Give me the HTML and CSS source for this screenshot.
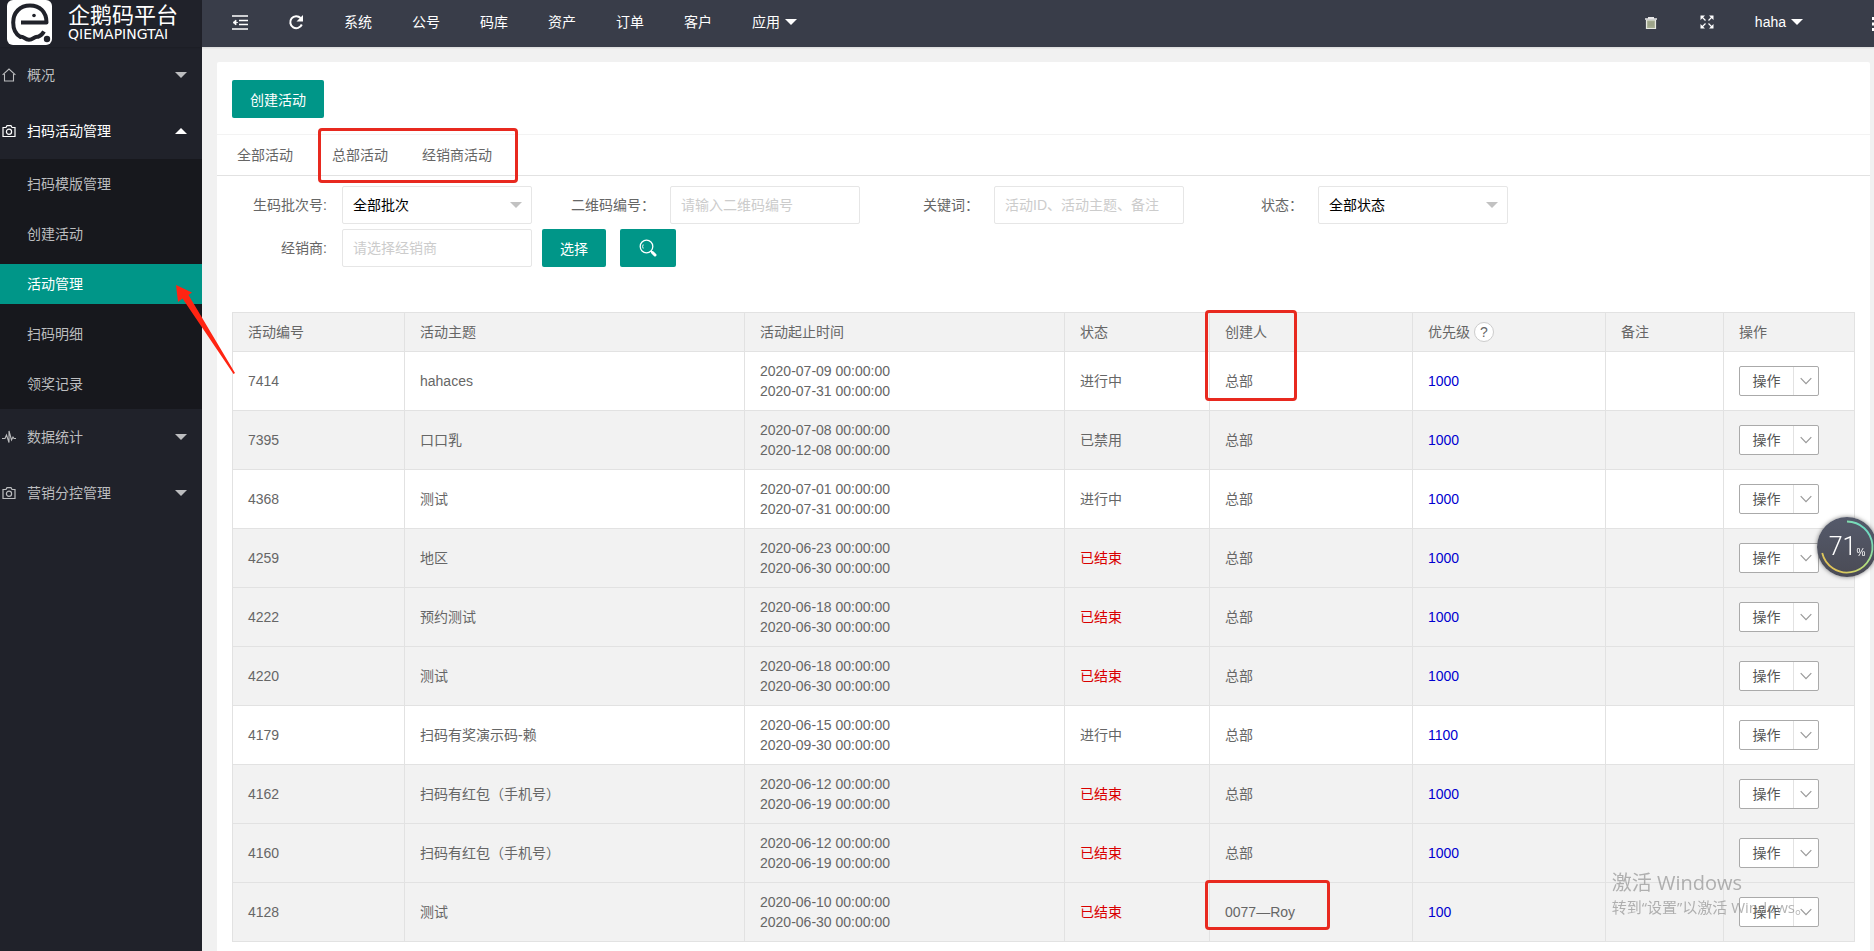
FILE: index.html
```html
<!DOCTYPE html>
<html lang="zh-CN">

<head>
    <meta charset="UTF-8">
    <meta name="viewport" content="width=device-width, initial-scale=1.0">
    <title>活动管理 - 企鹅码平台</title>
    <link rel="stylesheet" href="styles.css">
</head>

<body>
    <!-- 公用图标 -->
    <svg class="sprite" aria-hidden="true">
        <symbol id="i-camera" viewBox="0 0 14 12">
            <path d="M1 2.5h3l1-1.8h4l1 1.8h3v9H1z" fill="none" stroke="currentColor" stroke-width="1.2"/>
            <circle cx="7" cy="6.8" r="2.6" fill="none" stroke="currentColor" stroke-width="1.2"/>
        </symbol>
        <symbol id="i-down" viewBox="0 0 12 8">
            <path d="M.7 1.2 6 6.6l5.3-5.4" fill="none" stroke="currentColor" stroke-width="1.2"/>
        </symbol>
    </svg>

    <div class="layout">
        <aside class="sidebar">
            <div class="logo">
                <svg class="logo-mark" viewBox="0 0 45 45" aria-hidden="true">
                    <rect width="45" height="45" rx="6" fill="#fff"/>
                    <path d="M14 22.500H39.500C39.500 11.500 32.500 5.500 23 5.500C13 5.500 6.200 12.500 6.200 22.500C6.200 29 9 34.500 13.500 37C16.500 35.500 17.500 39.800 22 39.800C26.500 39.800 27 36 31 36.800C33.500 36 35.500 34 37 31.500" fill="none" stroke="#20222a" stroke-width="4" stroke-linejoin="round"/>
                    <circle cx="27" cy="15.500" r="1.800" fill="#20222a"/>
                    <circle cx="40" cy="39" r="3.200" fill="#20222a"/>
                </svg>
                <div class="logo-text">
                    <span class="logo-cn">企鹅码平台</span>
                    <span class="logo-en">QIEMAPINGTAI</span>
                </div>
            </div>

            <nav class="menu">
                <a class="menu-item" href="#">
                    <svg class="menu-icon" viewBox="0 0 14 14" aria-hidden="true"><path d="M.6 6.800 7 1l6.400 5.800M2.500 6v7h9V6" fill="none" stroke="currentColor" stroke-width="1.100"/></svg>
                    概况<span class="caret"></span>
                </a>
                <a class="menu-item open" href="#">
                    <svg class="menu-icon" aria-hidden="true"><use href="#i-camera"/></svg>
                    扫码活动管理<span class="caret up"></span>
                </a>
                <div class="submenu">
                    <a href="#">扫码模版管理</a>
                    <a href="#">创建活动</a>
                    <a href="#" class="active">活动管理</a>
                    <a href="#">扫码明细</a>
                    <a href="#">领奖记录</a>
                </div>
                <a class="menu-item" href="#">
                    <svg class="menu-icon" viewBox="0 0 14 14" aria-hidden="true"><path d="M0 8.500h3L4.500 5 7 12.500V1l2.500 9 1.500-3 1 1.500h2" fill="none" stroke="currentColor" stroke-width="1.100"/></svg>
                    数据统计<span class="caret"></span>
                </a>
                <a class="menu-item" href="#">
                    <svg class="menu-icon" aria-hidden="true"><use href="#i-camera"/></svg>
                    营销分控管理<span class="caret"></span>
                </a>
            </nav>
        </aside>

        <div class="content">
            <header class="topbar">
                <a href="#" aria-label="收起菜单">
                    <svg class="top-icon" viewBox="0 0 16 16" aria-hidden="true"><path d="M0 2h16M7 6.500h9M7 10.500h9M0 15h16" stroke="currentColor" stroke-width="1.600"/><path d="M1 8.500 4 6v5zM4 8.500h2" fill="currentColor" stroke="currentColor" stroke-width=".8"/></svg>
                </a>
                <a href="#" aria-label="刷新">
                    <svg class="top-icon" viewBox="0 0 16 16" aria-hidden="true"><path d="M12.600 4A6 6 0 1 0 13.800 10.500" fill="none" stroke="currentColor" stroke-width="2"/><path d="M15 1v6.500H8.500z" fill="currentColor"/></svg>
                </a>
                <a href="#">系统</a>
                <a href="#">公号</a>
                <a href="#">码库</a>
                <a href="#">资产</a>
                <a href="#">订单</a>
                <a href="#">客户</a>
                <a href="#">应用<span class="caret"></span></a>
                <a href="#" class="push" aria-label="清除缓存">
                    <svg class="top-icon" viewBox="0 0 16 16" aria-hidden="true"><path d="M3.500 6h9v8.500h-9z" fill="#a7ae93" stroke="#e6e8e0" stroke-width="1.200"/><path d="M2 5h12M5 3.700h6" stroke="#e8e8e8" stroke-width="1.600"/><path d="M6 7.500v5M8 7.500v5M10 7.500v5" stroke="#8d9678" stroke-width=".8"/></svg>
                </a>
                <a href="#" aria-label="全屏">
                    <svg class="top-icon" viewBox="0 0 16 16" aria-hidden="true"><path d="M1.500 1.500H6l-4.500 4.500zM14.500 1.500v4.500L10 1.500zM1.500 14.500V10L6 14.500zM14.500 14.500H10l4.500-4.500z" fill="currentColor"/><path d="m3 3 3.500 3.500M13 3 9.500 6.500M3 13l3.500-3.500M13 13 9.500 9.500" stroke="currentColor" stroke-width="1.200"/></svg>
                </a>
                <a href="#">haha<span class="caret"></span></a>
                <a href="#" class="more" aria-label="更多">
                    <svg viewBox="0 0 3 14" aria-hidden="true"><path d="M0 0h3v3H0zM0 5.500h3v3H0zM0 11h3v3H0z" fill="currentColor"/></svg>
                </a>
            </header>

            <main class="card">
                <div class="card-head">
                    <button type="button" class="btn">创建活动</button>
                </div>

                <div class="tabs">
                    <a href="#" class="first">全部活动</a>
                    <a href="#">总部活动</a>
                    <a href="#">经销商活动</a>
                    <div class="mark mark-tabs"></div>
                </div>

                <form class="filters">
                    <div class="filter-row">
                        <div class="field first">
                            <label for="batch">生码批次号:</label>
                            <div class="select">
                                <select id="batch">
                                    <option>全部批次</option>
                                </select>
                            </div>
                        </div>
                        <div class="field">
                            <label for="qrcode">二维码编号：</label>
                            <input type="text" id="qrcode" placeholder="请输入二维码编号">
                        </div>
                        <div class="field">
                            <label for="keyword">关键词：</label>
                            <input type="text" id="keyword" placeholder="活动ID、活动主题、备注">
                        </div>
                        <div class="field">
                            <label for="status">状态：</label>
                            <div class="select">
                                <select id="status">
                                    <option>全部状态</option>
                                </select>
                            </div>
                        </div>
                    </div>
                    <div class="filter-row">
                        <div class="field first">
                            <label for="dealer">经销商:</label>
                            <input type="text" id="dealer" placeholder="请选择经销商">
                        </div>
                        <button type="button" class="btn btn-pick">选择</button>
                        <button type="button" class="btn" aria-label="搜索">
                            <svg class="search-icon" viewBox="0 0 20 20" aria-hidden="true"><circle cx="8.500" cy="8.500" r="6.300" fill="none" stroke="currentColor" stroke-width="1.300"/><path d="M5.200 6.500a4 4 0 0 0 0 4" fill="none" stroke="currentColor"/><path d="m13 13 1.500 1.500" stroke="currentColor" stroke-width="1.300"/><path d="m14.500 14.500 2.500 2.500" stroke="currentColor" stroke-width="3" stroke-linecap="round"/></svg>
                        </button>
                    </div>
                </form>

                <div class="table-wrap">
                    <table>
                        <colgroup>
                            <col class="c-id">
                            <col class="c-title">
                            <col class="c-time">
                            <col class="c-status">
                            <col class="c-owner">
                            <col class="c-level">
                            <col class="c-note">
                            <col class="c-action">
                        </colgroup>
                        <thead>
                            <tr>
                                <th>活动编号</th>
                                <th>活动主题</th>
                                <th>活动起止时间</th>
                                <th>状态</th>
                                <th class="marked">创建人<div class="mark mark-owner"></div></th>
                                <th>优先级<button type="button" class="help">?</button></th>
                                <th>备注</th>
                                <th>操作</th>
                            </tr>
                        </thead>
                        <tbody id="rows"></tbody>
                    </table>
                </div>
            </main>
        </div>
    </div>

    <!-- 箭头标注 -->
    <svg class="arrow" viewBox="0 0 60 92" aria-hidden="true"><path d="M1 1 17 8.500 13.500 11 60 89 58.500 90 7.500 14.500 3 18z" fill="#ff2412"/></svg>

    <!-- 悬浮球 -->
    <div class="ball">
        <svg viewBox="0 0 60 60" aria-hidden="true">
            <defs>
                <linearGradient id="ring" x1="0" y1="1" x2="1" y2="0">
                    <stop offset="0" stop-color="#f0b84a"/>
                    <stop offset=".5" stop-color="#b9e07a"/>
                    <stop offset="1" stop-color="#4fd8e0"/>
                </linearGradient>
            </defs>
            <path d="M30 4.500A25.500 25.500 0 1 1 5.200 36" fill="none" stroke="url(#ring)" stroke-width="1.800"/>
        </svg>
        <span class="ball-num">71</span><span class="ball-unit">%</span>
    </div>

    <div class="watermark">
        <p class="wm-title">激活 Windows</p>
        <p class="wm-text">转到“设置”以激活 Windows。</p>
    </div>

    <script>
        const rows = [
            ['7414', 'hahaces', '2020-07-09', '2020-07-31', '进行中', '总部', '1000'],
            ['7395', '口口乳', '2020-07-08', '2020-12-08', '已禁用', '总部', '1000'],
            ['4368', '测试', '2020-07-01', '2020-07-31', '进行中', '总部', '1000'],
            ['4259', '地区', '2020-06-23', '2020-06-30', '已结束', '总部', '1000'],
            ['4222', '预约测试', '2020-06-18', '2020-06-30', '已结束', '总部', '1000'],
            ['4220', '测试', '2020-06-18', '2020-06-30', '已结束', '总部', '1000'],
            ['4179', '扫码有奖演示码-赖', '2020-06-15', '2020-09-30', '进行中', '总部', '1100'],
            ['4162', '扫码有红包（手机号）', '2020-06-12', '2020-06-19', '已结束', '总部', '1000'],
            ['4160', '扫码有红包（手机号）', '2020-06-12', '2020-06-19', '已结束', '总部', '1000'],
            ['4128', '测试', '2020-06-10', '2020-06-30', '已结束', '0077—Roy', '100']
        ];

        document.getElementById('rows').innerHTML = rows.map(([id, title, start, end, status, owner, level]) => {
            const running = status === '进行中';
            const ended = status === '已结束';
            const isDealer = owner !== '总部';
            return `<tr class="${running ? '' : 'off'}">
                <td>${id}</td>
                <td>${title}</td>
                <td>${start} 00:00:00<br>${end} 00:00:00</td>
                <td class="${ended ? 'ended' : ''}">${status}</td>
                <td class="${isDealer ? 'marked' : ''}">${owner}${isDealer ? '<div class="mark mark-dealer"></div>' : ''}</td>
                <td><a href="#" class="level">${level}</a></td>
                <td></td>
                <td><button type="button" class="action"><span>操作</span><svg viewBox="0 0 12 8" aria-hidden="true"><use href="#i-down"/></svg></button></td>
            </tr>`;
        }).join('');
    </script>
</body>

</html>
```
FILE: styles.css
```css
* {
    box-sizing: border-box;
    margin: 0;
    padding: 0;
}

body {
    background-color: #f1f1f1;
    color: #666;
    font-family: 'Liberation Sans', 'Noto Sans CJK SC', sans-serif;
    font-size: 14px;
    line-height: 24px;
    overflow: hidden;
}

a {
    color: inherit;
    text-decoration: none;
}

input,
select,
button {
    font-family: inherit;
    font-size: 14px;
}

.sprite {
    position: absolute;
    width: 0;
    height: 0;
}

.layout {
    display: flex;
    min-height: 100vh;
}

/* 左侧菜单 */
.sidebar {
    flex: none;
    width: 202px;
    background-color: #20222a;
    color: #bcbdbf;
}

.logo {
    display: flex;
    gap: 16px;
    height: 47px;
    padding-left: 7px;
    color: #fff;
    box-shadow: 0 1px 2px rgba(0, 0, 0, 0.15);
}

.logo-mark {
    width: 45px;
    height: 45px;
}

.logo-text {
    display: flex;
    flex-direction: column;
    padding-top: 5px;
    white-space: nowrap;
}

.logo-cn {
    font-size: 22px;
    line-height: 22px;
}

.logo-en {
    font-family: 'DejaVu Sans', sans-serif;
    font-size: 14px;
    line-height: 14px;
}

.menu-item {
    display: flex;
    align-items: center;
    height: 56px;
    padding: 0 15px 0 2px;
}

.menu-item.open {
    color: #fff;
}

.menu-icon {
    width: 14px;
    height: 14px;
    margin-right: 11px;
}

.menu .caret {
    margin-left: auto;
}

.caret {
    border: 6px solid transparent;
    border-top-color: currentColor;
    border-bottom: 0;
}

.caret.up {
    border-top: 0;
    border-bottom: 6px solid currentColor;
}

.submenu {
    display: flex;
    flex-direction: column;
    gap: 10px;
    padding: 5px 0;
    background-color: #17181d;
}

.submenu a {
    line-height: 40px;
    padding-left: 27px;
}

.submenu .active {
    background-color: #009688;
    color: #fff;
}

/* 顶部导航 */
.content {
    flex: 1;
    min-width: 0;
    display: flex;
    flex-direction: column;
}

.topbar {
    display: flex;
    height: 47px;
    padding-left: 10px;
    background-color: #393d49;
    color: #fff;
    box-shadow: 0 1px 2px rgba(0, 0, 0, 0.1);
}

.topbar a {
    display: flex;
    align-items: center;
    gap: 5px;
    padding: 0 20px 3px;
}

.topbar .push {
    margin-left: auto;
}

.topbar .more {
    width: 51px;
    padding: 0 0 0 49px;
    overflow: hidden;
}

.more svg {
    flex: none;
    width: 3px;
    height: 14px;
}

.top-icon {
    width: 16px;
    height: 16px;
}

/* 主体卡片 */
.card {
    flex: 1;
    margin: 15px 4px 0 15px;
    background-color: #fff;
    border-radius: 2px 2px 0 0;
}

.card-head {
    padding: 18px 15px 16px;
    border-bottom: 1px solid #f3f3f3;
}

.btn {
    display: inline-flex;
    align-items: center;
    height: 38px;
    padding: 0 18px;
    border: none;
    border-radius: 2px;
    background-color: #009688;
    color: #fff;
    cursor: pointer;
}

.card-head .btn {
    display: flex;
}

.tabs {
    position: relative;
    display: flex;
    gap: 4px;
    padding-left: 5px;
    border-bottom: 1px solid #e2e2e2;
}

.tabs a {
    padding: 0 15px;
    line-height: 40px;
}

.tabs .first {
    padding-right: 20px;
}

/* 查询条件 */
.filters {
    display: flex;
    flex-direction: column;
    gap: 5px;
    padding: 10px 0 45px 1px;
}

.filter-row {
    display: flex;
    gap: 10px;
}

.field {
    display: flex;
    align-items: center;
}

.field label {
    width: 124px;
    padding-right: 15px;
    text-align: right;
}

.filter-row:first-child .first {
    margin-right: 4px;
}

.field input,
.field select {
    width: 190px;
    height: 38px;
    padding: 0 10px;
    border: 1px solid #e6e6e6;
    border-radius: 2px;
    background-color: #fff;
    color: #000;
}

.field select {
    appearance: none;
}

.field input::placeholder {
    color: #ccc;
}

.select {
    position: relative;
}

.select::after {
    content: '';
    position: absolute;
    top: 16px;
    right: 10px;
    border: 6px solid transparent;
    border-top-color: #c2c2c2;
    border-bottom: 0;
    pointer-events: none;
}

.btn-pick {
    margin-right: 4px;
}

.search-icon {
    width: 20px;
    height: 20px;
}

/* 活动列表 */
.table-wrap {
    padding: 0 15px 9px;
}

table {
    width: 100%;
    table-layout: fixed;
    border-collapse: collapse;
}

.c-id { width: 172px; }
.c-title { width: 340px; }
.c-time { width: 320px; }
.c-status { width: 145px; }
.c-owner { width: 203px; }
.c-level { width: 193px; }
.c-note { width: 118px; }
.c-action { width: 131px; }

th,
td {
    border: 1px solid #e2e2e2;
    padding: 0 15px;
    text-align: left;
    font-weight: 400;
}

th {
    height: 39px;
    background-color: #f2f2f2;
}

td {
    height: 59px;
    line-height: 20px;
}

.off {
    background-color: #f2f2f2;
}

.ended {
    color: #d90000;
}

.level {
    color: #0000d0;
}

.help {
    width: 20px;
    height: 20px;
    margin-left: 4px;
    border: 1px solid #ccc;
    border-radius: 50%;
    background-color: #fff;
    color: #666;
}

.action {
    display: flex;
    align-items: center;
    width: 80px;
    height: 30px;
    border: 1px solid #aaa;
    border-radius: 2px;
    background-color: #fff;
    color: #555;
    cursor: pointer;
}

.action span {
    flex: 1;
    line-height: 28px;
    border-right: 1px solid #e2e2e2;
}

.action svg {
    width: 12px;
    height: 8px;
    margin: 0 6px;
    color: #999;
}

/* 红框与箭头标注 */
.marked {
    position: relative;
}

.mark {
    position: absolute;
    border: 3px solid #e8291f;
    border-radius: 4px;
    pointer-events: none;
    z-index: 1;
}

.mark-tabs {
    top: -7px;
    left: 101px;
    width: 200px;
    height: 55px;
}

.mark-owner {
    top: -3px;
    left: -5px;
    width: 92px;
    height: 91px;
}

.mark-dealer {
    top: -3px;
    left: -5px;
    width: 125px;
    height: 50px;
}

.arrow {
    position: absolute;
    top: 284px;
    left: 175px;
    width: 60px;
    height: 92px;
}

/* 悬浮球 */
.ball {
    position: fixed;
    top: 517px;
    right: -3px;
    display: flex;
    align-items: center;
    justify-content: center;
    width: 60px;
    height: 60px;
    border-radius: 50%;
    background: linear-gradient(#555a6b, #4a4b55);
    box-shadow: 0 0 4px rgba(0, 0, 0, 0.5);
    color: #fff;
}

.ball svg {
    position: absolute;
    width: 60px;
    height: 60px;
}

.ball-num {
    font-family: Roboto, sans-serif;
    font-weight: 300;
    font-size: 25px;
}

.ball-unit {
    align-self: flex-end;
    padding-bottom: 12px;
    font-size: 10px;
}

.watermark {
    position: fixed;
    right: 64px;
    bottom: 33px;
    color: rgba(130, 130, 130, 0.6);
    font-family: 'Open Sans', 'Noto Sans CJK SC', sans-serif;
    pointer-events: none;
}

.wm-title {
    font-size: 20px;
    line-height: 26px;
}

.wm-text {
    font-size: 15px;
    line-height: 22px;
}
```
